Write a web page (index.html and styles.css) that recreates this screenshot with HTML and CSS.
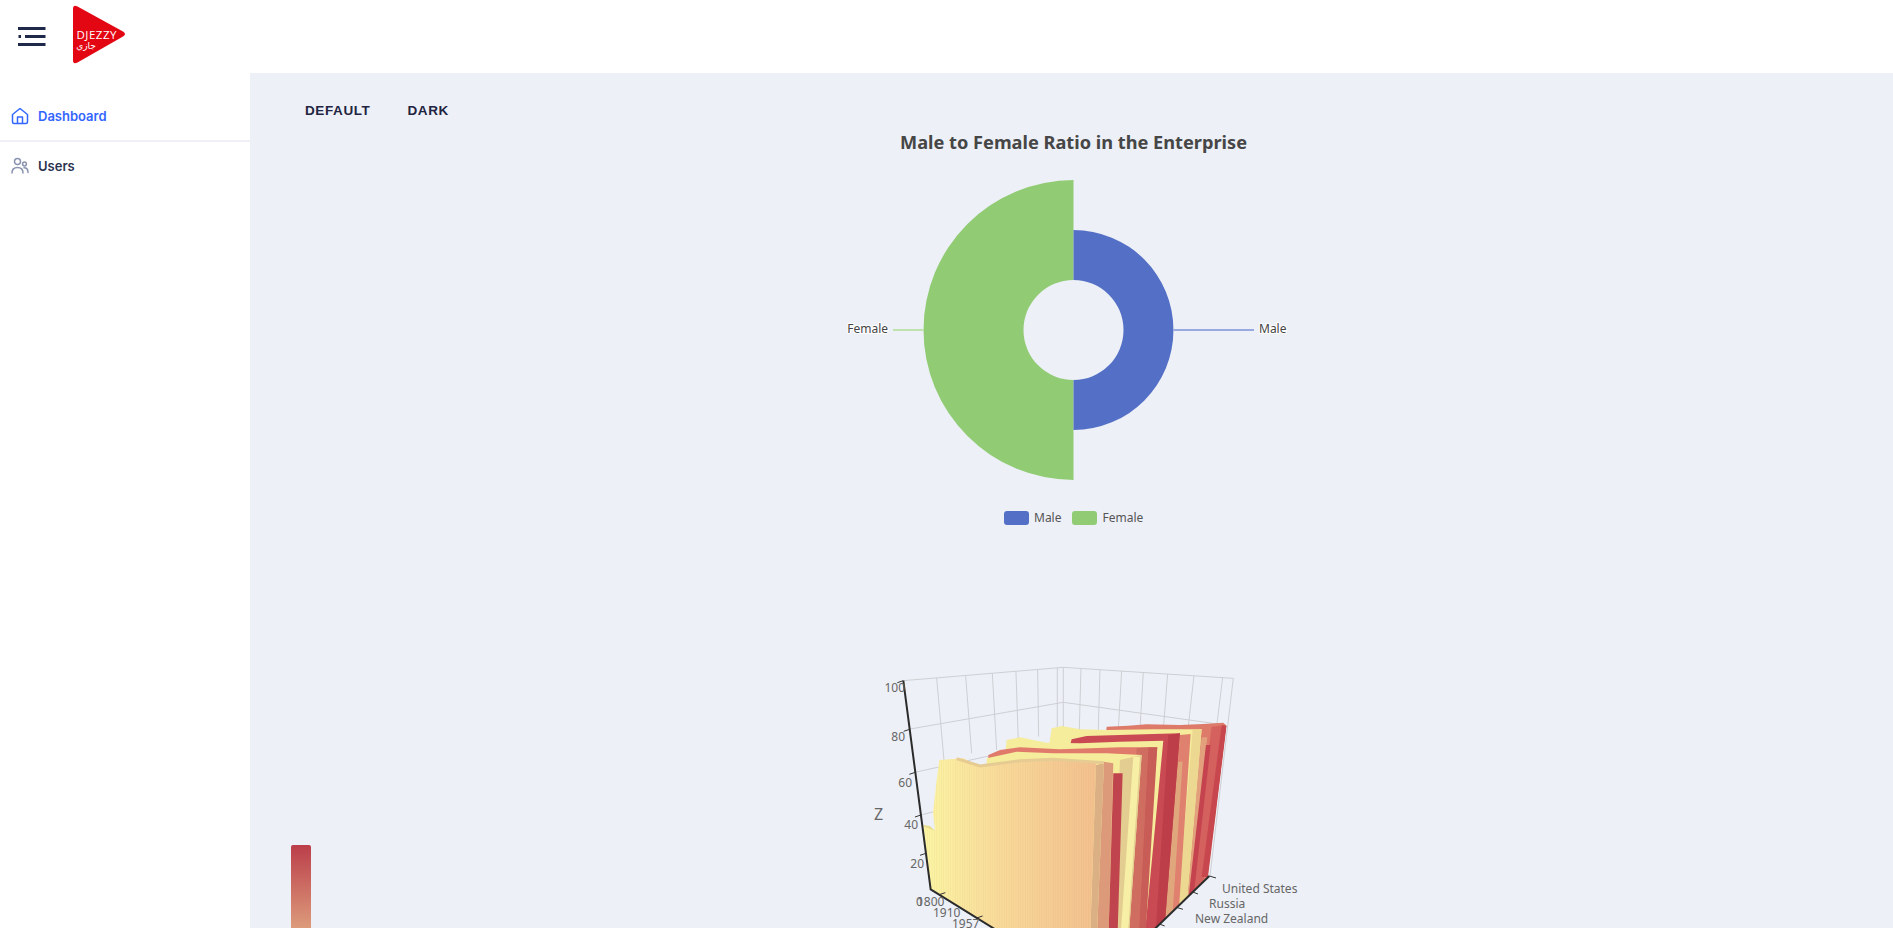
FILE: index.html
```html
<!DOCTYPE html>
<html lang="en">
<head>
    <meta charset="UTF-8">
    <meta name="viewport" content="width=device-width, initial-scale=1.0">
    <title>Dashboard</title>
    <link rel="stylesheet" href="styles.css">
</head>
<body>
    <header class="topbar">
        <button class="menu-btn" aria-label="Menu">
            <svg width="28" height="20" viewBox="0 0 28 20">
                <path d="M0 1.5H27.5M7 9.5H27.5M0 17.5H27.5" stroke="#1f2a4a" stroke-width="3" fill="none"/>
                <rect x="0.5" y="8" width="2.5" height="3" fill="#1f2a4a"/>
            </svg>
        </button>
        <svg class="logo" width="56" height="62" viewBox="0 0 56 62">
            <path d="M2 5 Q2 0 6.5 2.5 L52 27.5 Q56 30 52 32.5 L6.5 58.5 Q2 61 2 56 Z" fill="#e30613"/>
            <text x="5.5" y="35" class="logo-name">DJEZZY</text>
            <text x="15" y="45" class="logo-sub" text-anchor="middle">جازي</text>
        </svg>
    </header>

    <div class="layout">
        <nav class="sidebar">
            <a class="nav-item active" href="#">
                <svg width="18" height="18" viewBox="0 0 18 18" fill="none" stroke="#3366ff" stroke-width="1.5" stroke-linejoin="round">
                    <path d="M1.5 7.5 9 1.5l7.5 6V15a1.5 1.5 0 0 1-1.5 1.5H3A1.5 1.5 0 0 1 1.5 15Z"/>
                    <path d="M6.5 16.5V10h5v6.5"/>
                </svg>
                <span>Dashboard</span>
            </a>
            <a class="nav-item" href="#">
                <svg width="18" height="18" viewBox="0 0 18 18" fill="none" stroke="#8a94b0" stroke-width="1.5" stroke-linecap="round">
                    <circle cx="6.5" cy="4.5" r="3"/>
                    <circle cx="13.5" cy="7" r="1.9"/>
                    <path d="M1 16c0-3.5 2.3-5.5 5.5-5.5S12 12.500 12 16"/>
                    <path d="M13 10.800c2.500 0 4 1.700 4 4.700"/>
                </svg>
                <span>Users</span>
            </a>
        </nav>

        <main class="content">
            <div class="tabs">
                <button class="tab">DEFAULT</button>
                <button class="tab">DARK</button>
            </div>

            <svg class="chart chart-pie" viewBox="250 125 1643 500">
                <text x="1073.500" y="148.500" class="chart-title" text-anchor="middle">Male to Female Ratio in the Enterprise</text>

                <path d="M1073.500 180A150 150 0 0 0 1073.500 480V380A50 50 0 0 1 1073.500 280Z" fill="#91cc75"/>
                <path d="M1073.500 230A100 100 0 0 1 1073.500 430V380A50 50 0 0 0 1073.500 280Z" fill="#5470c6"/>

                <path d="M1173.500 330H1254" stroke="#98a9e0" stroke-width="2"/>
                <path d="M893 330H924" stroke="#bfe2ae" stroke-width="2"/>
                <text x="1259" y="333" class="pie-label">Male</text>
                <text x="888" y="333" class="pie-label" text-anchor="end">Female</text>

                <rect x="1004" y="511" width="25" height="14" rx="3" fill="#5470c6"/>
                <text x="1034" y="521.500" class="legend-label">Male</text>
                <rect x="1072" y="511" width="25" height="14" rx="3" fill="#91cc75"/>
                <text x="1102.500" y="521.500" class="legend-label">Female</text>
            </svg>

            <svg class="chart chart-3d" viewBox="250 625 1643 303">
                <defs>
                    <linearGradient id="scaleFill" x1="0" y1="0" x2="0" y2="1">
                        <stop offset="0" stop-color="#bb3e4a"/>
                        <stop offset="0.42" stop-color="#dd9c7c"/>
                        <stop offset="1" stop-color="#f9f0a4"/>
                    </linearGradient>
                    <linearGradient id="frontFill" gradientUnits="userSpaceOnUse" x1="10" y1="0" x2="528" y2="0">
                        <stop offset="0" stop-color="#fbf6a4"/>
                        <stop offset="0.45" stop-color="#f8da9a"/>
                        <stop offset="1" stop-color="#f2c08e"/>
                    </linearGradient>
                    <pattern id="stripes" patternUnits="userSpaceOnUse" width="7" height="7">
                        <rect width="2" height="7" fill="#d89a60" fill-opacity="0.14"/>
                    </pattern>
                    <clipPath id="surfaceClip">
                        <polygon points="0,0 925,0 920,47 864,501 654,705 300,705 30,534 0,300"/>
                    </clipPath>
                </defs>

                <rect x="291" y="845" width="20" height="200" rx="2" fill="url(#scaleFill)"/>

                <g transform="translate(820 640) scale(0.3333)">
                    <!-- back walls -->
                    <g class="grid-lines">
                        <path d="M250 122 730 82 1240 115 1170 708"/>
                        <path d="M730 82V300M712 84V300"/>
                        <path d="M350 114 372 360M437 107 455 340M517 100 530 330M588 94 595 310M653 88 656 290"/>
                        <path d="M783 86 778 270M840 89 835 270M905 93 895 270M970 97 960 270M1043 102 1030 270M1122 107 1105 260M1208 113 1190 260"/>
                        <path d="M265 268 730 187 1215 255M285 397 520 345M303 525 350 513"/>
                    </g>

                    <!-- surface, drawn back to front -->
                    <g transform="translate(300 210)" clip-path="url(#surfaceClip)">
                        <polygon points="560,50 625,47 680,43 780,45 850,42 910,38 920,47 860,560 500,700" fill="#dd7a6a"/>
                        <polygon points="875,50 905,47 845,560 810,560" fill="#d4615d"/>
                        <polygon points="905,45 920,47 864,501 845,501" fill="#c8474f"/>
                        <polygon points="845,82 862,82 800,700 770,700" fill="#e2a07c"/>
                        <polygon points="858,105 872,105 805,700 790,700" fill="#c5434e"/>

                        <polygon points="395,55 425,48 480,58 560,60 700,58 845,58 790,700 300,700" fill="#f5ec9c"/>
                        <polygon points="818,60 845,58 790,700 765,700" fill="#ecd890"/>

                        <polygon points="780,75 812,72 770,700 730,700" fill="#e0806f"/>
                        <polygon points="770,155 788,155 752,700 730,700" fill="#e0a67c"/>
                        <polygon points="455,88 500,78 600,75 700,72 780,70 730,700 300,700" fill="#c94a52"/>
                        <polygon points="745,76 780,70 730,700 705,700" fill="#bd3d48"/>

                        <polygon points="260,90 300,82 380,98 480,100 600,95 730,92 672,700 200,700" fill="#f5ec9c"/>

                        <polygon points="205,135 240,120 300,112 420,118 600,112 712,112 660,700 200,700" fill="#e07b6b"/>
                        <polygon points="650,115 685,112 655,700 615,700" fill="#cf6e60"/>
                        <polygon points="685,112 712,112 675,700 655,700" fill="#c85d58"/>

                        <polygon points="200,145 290,125 400,130 560,130 665,135 625,700 200,700" fill="#f5ec9c"/>
                        <polygon points="600,150 665,135 625,700 580,700" fill="#e3cd90"/>
                        <polygon points="640,140 660,140 622,700 600,700" fill="#f7efa5"/>

                        <polygon points="552,155 580,160 565,700 530,700" fill="#dd9a7a"/>
                        <polygon points="580,190 608,190 592,700 565,700" fill="#c0444d"/>
                        <polygon points="528,165 552,160 530,700 510,700" fill="#dcb085"/>

                        <polygon points="10,345 45,360 39,309 50,210 58,150 130,145 180,170 300,155 400,150 528,160 510,700 230,700 30,534" fill="url(#frontFill)"/>
                        <polygon points="10,345 45,360 39,309 50,210 58,150 130,145 180,170 300,155 400,150 528,160 510,700 230,700 30,534" fill="url(#stripes)"/>
                        <polyline points="110,146 180,168 300,152 400,148 552,158" fill="none" stroke="#e6cb92" stroke-width="9"/>
                        <polygon points="10,345 30,348 45,362 12,350" fill="#e8dd8e"/>
                    </g>

                    <!-- axes -->
                    <g class="axis-lines">
                        <path d="M250 122 332 748 738 1000"/>
                        <path d="M1168 708 859 1008"/>
                    </g>
                    <g class="axis-ticks">
                        <path d="M250 122 232 128M269 268 251 274M286 397 268 403M303 525 285 531M318 640 300 646"/>
                        <path d="M1168 708 1188 714M1118 756 1134 762M1069 802 1089 808M1018 852 1034 858"/>
                        <path d="M358 764 376 758M470 834 488 828"/>
                    </g>
                </g>

                <g class="axis-label">
                    <text x="905" y="692" text-anchor="end">100</text>
                    <text x="905" y="741" text-anchor="end">80</text>
                    <text x="912" y="787" text-anchor="end">60</text>
                    <text x="918" y="829" text-anchor="end">40</text>
                    <text x="924" y="868" text-anchor="end">20</text>
                    <text x="916" y="906">0</text>
                    <text x="917" y="906">1800</text>
                    <text x="933" y="917">1910</text>
                    <text x="952" y="928">1957</text>
                    <text x="1222" y="893">United States</text>
                    <text x="1209" y="907.500">Russia</text>
                    <text x="1195" y="922.500">New Zealand</text>
                </g>
                <text x="874" y="820" class="axis-name">Z</text>
            </svg>
        </main>
    </div>
</body>
</html>
```

FILE: styles.css
```css
* {
    box-sizing: border-box;
}
html, body {
    height: 100%;
}
body {
    margin: 0;
    overflow: hidden;
    background-color: #fff;
    font-family: Inter, "Liberation Sans", sans-serif;
}
.topbar {
    display: flex;
    align-items: center;
    height: 73px;
    padding-left: 18px;
    background-color: #fff;
}
.menu-btn {
    display: flex;
    width: 28px;
    padding: 0;
    border: 0;
    background: none;
    cursor: pointer;
}
.logo {
    flex-shrink: 0;
    margin-left: 25px;
    margin-bottom: 3px;
}
.logo-name {
    font-family: "Open Sans", "Liberation Sans", sans-serif;
    font-size: 11.5px;
    font-weight: 500;
    letter-spacing: 0.5px;
    fill: #fff;
}
.logo-sub {
    font-family: "DejaVu Sans", sans-serif;
    font-size: 9px;
    fill: #fff;
}
.layout {
    display: flex;
    height: calc(100% - 73px);
}
.sidebar {
    flex: 0 0 250px;
    padding-top: 19px;
    background-color: #fff;
}
.nav-item {
    display: flex;
    align-items: center;
    gap: 9px;
    height: 48px;
    padding: 0 0 0 11px;
    color: #2c3350;
    font-size: 13px;
    font-weight: 600;
    text-decoration: none;
}
.nav-item.active {
    height: 50px;
    color: #3366ff;
    border-bottom: 2px solid #eef0f5;
}
.content {
    flex: 1;
    min-width: 0;
    background-color: #edf0f7;
}
.tabs {
    display: flex;
    gap: 37px;
    height: 52px;
    padding: 29px 0 0 55px;
}
.tab {
    height: 16px;
    padding: 0;
    border: 0;
    background: none;
    color: #1f2440;
    font-family: "Liberation Sans", Arial, sans-serif;
    font-size: 13.5px;
    font-weight: 700;
    letter-spacing: 0.6px;
    cursor: pointer;
}
.chart {
    display: block;
    width: 100%;
}
.chart-pie {
    height: 500px;
}
.chart-3d {
    height: 303px;
}
.chart-title {
    font-family: "Noto Sans", "Open Sans", sans-serif;
    font-size: 18.2px;
    font-weight: 700;
    fill: #464646;
}
.pie-label {
    font-family: "Noto Sans", sans-serif;
    font-size: 12px;
    fill: #444;
    stroke: #fff;
    stroke-width: 2px;
    paint-order: stroke;
}
.legend-label {
    font-family: "Noto Sans", sans-serif;
    font-size: 12px;
    fill: #555;
}
.grid-lines path {
    fill: none;
    stroke: #cdcfd3;
    stroke-width: 3px;
}
.axis-lines path {
    fill: none;
    stroke: #2b2b2b;
    stroke-width: 6px;
}
.axis-ticks path {
    fill: none;
    stroke: #333;
    stroke-width: 3px;
}
.axis-label text {
    font-family: "Noto Sans", sans-serif;
    font-size: 12px;
    fill: #666;
}
.axis-name {
    font-family: "Noto Sans", sans-serif;
    font-size: 16px;
    fill: #666;
}
```
